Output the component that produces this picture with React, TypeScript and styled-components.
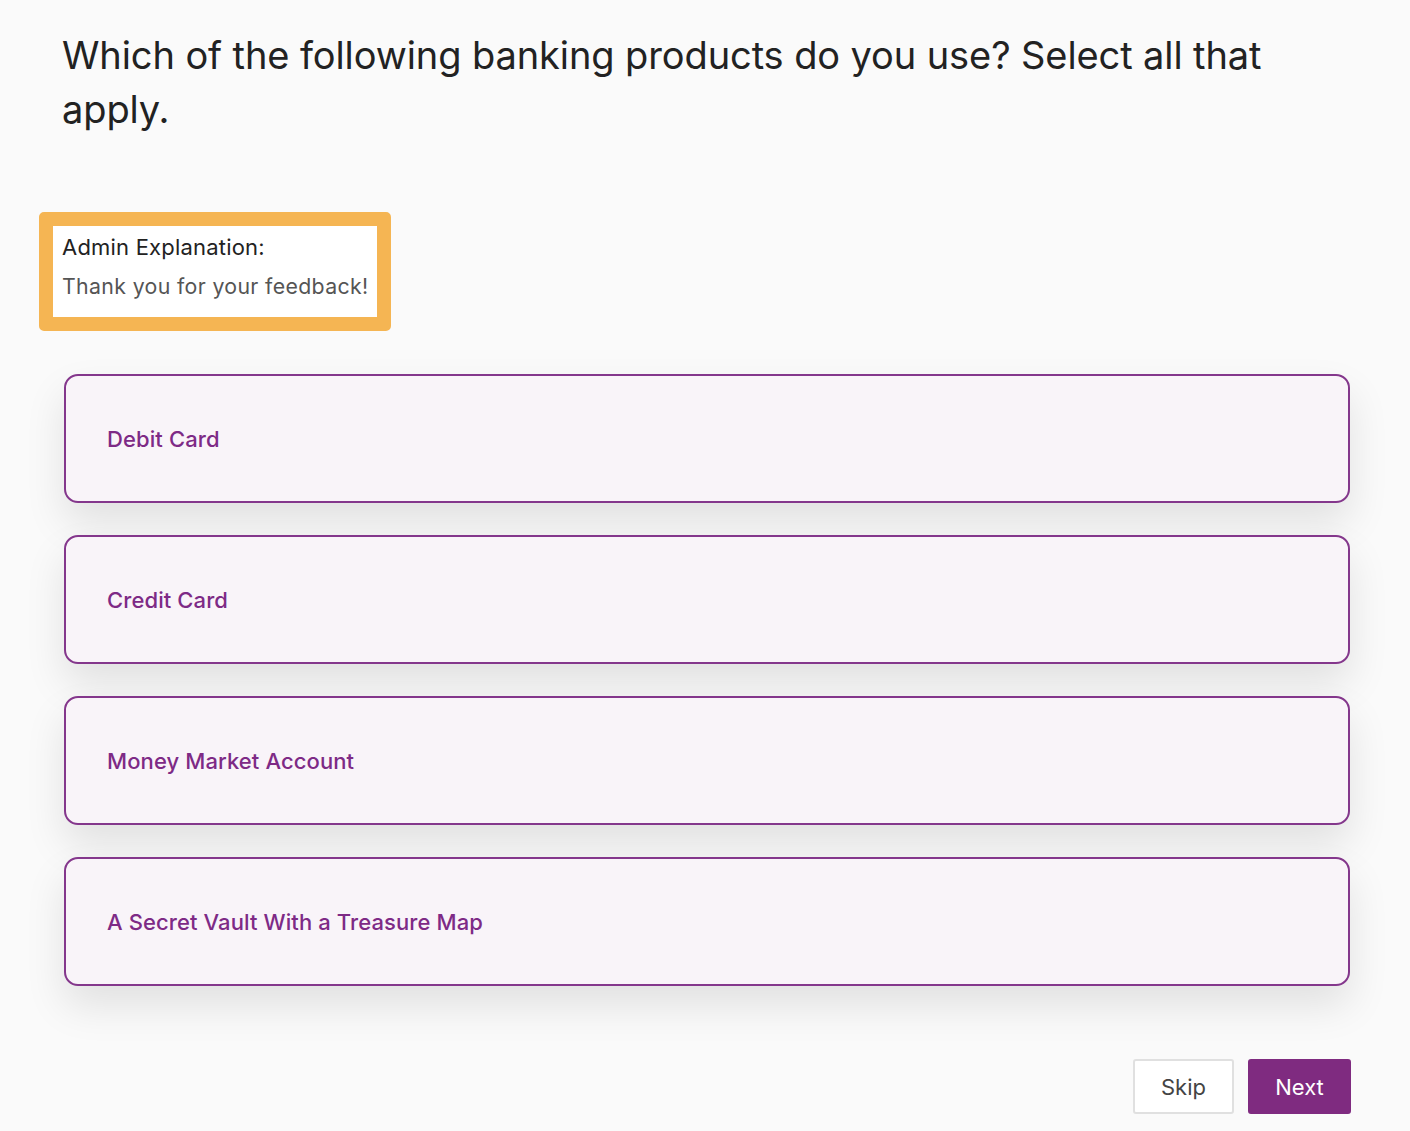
import React from "react";
import styled, { createGlobalStyle } from "styled-components";

const GlobalStyle = createGlobalStyle`
  html, body {
    margin: 0;
    padding: 0;
    background: #fafafa;
  }
  body {
    font-family: Inter, "Noto Sans", "Liberation Sans", sans-serif;
    -webkit-font-smoothing: antialiased;
  }
`;

// page wrapper
const Page = styled.div`
  width: 1410px;
  min-height: 1131px;
  box-sizing: border-box;
  padding: 28px 60px 0 39px;
`;

const Question = styled.h1`
  margin: 0 0 0 23px;
  font-size: 38px;
  line-height: 54px;
  font-weight: 400;
  color: #222;
  letter-spacing: -0.1px;
`;

// orange highlighted admin note
const AdminBox = styled.div`
  display: inline-flex;
  flex-direction: column;
  gap: 11px;
  margin-top: 76px;
  padding: 7px 8px 17px 9px;
  border: 14px solid #f5b553;
  border-radius: 5px;
  background: #fff;
`;

const AdminLabel = styled.div`
  font-size: 22px;
  line-height: 28px;
  color: #222;
  letter-spacing: 0.2px;
`;

const AdminText = styled.div`
  font-size: 21.3px;
  line-height: 28px;
  color: #555;
  letter-spacing: 0.35px;
`;

const Options = styled.div`
  display: flex;
  flex-direction: column;
  gap: 32px;
  margin: 43px 0 0 25px;
`;

const Option = styled.button`
  display: flex;
  align-items: center;
  height: 129px;
  padding: 0 0 0 41px;
  box-sizing: border-box;
  border: 2px solid #84378c;
  border-radius: 14px;
  background: #f9f4f9;
  box-shadow: 0 20px 40px rgba(0, 0, 0, 0.1);
  font-family: inherit;
  font-size: 22px;
  font-weight: 500;
  color: #7e2a86;
  letter-spacing: 0.1px;
  text-align: left;
  cursor: pointer;
`;

const Footer = styled.div`
  display: flex;
  justify-content: flex-end;
  gap: 14px;
  margin: 73px -1px 0 0;
`;

const Button = styled.button<{ $primary?: boolean }>`
  height: 55px;
  width: ${(p) => (p.$primary ? "103px" : "101px")};
  padding: 0;
  border-radius: 3px;
  border: 2px solid ${(p) => (p.$primary ? "#7f2b80" : "#e0e0e0")};
  background: ${(p) => (p.$primary ? "#7f2b80" : "#fff")};
  color: ${(p) => (p.$primary ? "#fff" : "#444")};
  font-family: inherit;
  font-size: 22px;
  cursor: pointer;
`;

const options = [
  "Debit Card",
  "Credit Card",
  "Money Market Account",
  "A Secret Vault With a Treasure Map",
];

export default function App() {
  return (
    <>
      <GlobalStyle />
      <Page>
        <Question>
          Which of the following banking products do you use? Select all that
          apply.
        </Question>
        <AdminBox>
          <AdminLabel>Admin Explanation:</AdminLabel>
          <AdminText>Thank you for your feedback!</AdminText>
        </AdminBox>
        <Options>
          {options.map((o) => (
            <Option key={o}>{o}</Option>
          ))}
        </Options>
        <Footer>
          <Button>Skip</Button>
          <Button $primary>Next</Button>
        </Footer>
      </Page>
    </>
  );
}
